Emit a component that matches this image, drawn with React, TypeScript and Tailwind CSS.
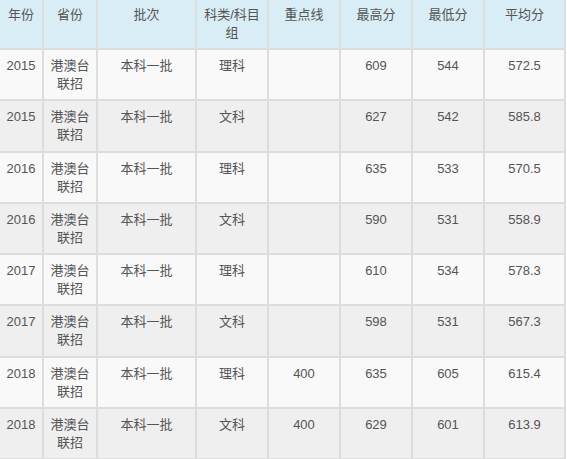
import React from "react";

const headers = ["年份", "省份", "批次", "科类/科目组", "重点线", "最高分", "最低分", "平均分"];

const rows: string[][] = [
  ["2015", "港澳台联招", "本科一批", "理科", "", "609", "544", "572.5"],
  ["2015", "港澳台联招", "本科一批", "文科", "", "627", "542", "585.8"],
  ["2016", "港澳台联招", "本科一批", "理科", "", "635", "533", "570.5"],
  ["2016", "港澳台联招", "本科一批", "文科", "", "590", "531", "558.9"],
  ["2017", "港澳台联招", "本科一批", "理科", "", "610", "534", "578.3"],
  ["2017", "港澳台联招", "本科一批", "文科", "", "598", "531", "567.3"],
  ["2018", "港澳台联招", "本科一批", "理科", "400", "635", "605", "615.4"],
  ["2018", "港澳台联招", "本科一批", "文科", "400", "629", "601", "613.9"],
];

export default function App() {
  return (
    <div
      className="w-[567px] h-[459px] overflow-hidden bg-white text-[13px] leading-[18px] text-[#555]"
      style={{ fontFamily: '"Liberation Sans", "Noto Sans CJK SC", sans-serif' }}
    >
      <div className="grid w-[566px] grid-cols-[42px_52px_97px_70px_70px_70px_70px_79px] gap-[2px] bg-[#dddddd] pr-[2px] pb-[2px]">
        {headers.map((h) => (
          <div key={h} className="h-[48px] bg-[#d9edf7] px-[6px] pt-[6px] text-center break-all">
            {h}
          </div>
        ))}
        {rows.map((r, i) =>
          r.map((c, j) => (
            <div
              key={`${i}-${j}`}
              className={`h-[49.3px] px-[6px] pt-[7px] text-center break-all ${i % 2 === 0 ? "bg-[#f9f9f9]" : "bg-[#efefef]"}`}
            >
              {j === 1 ? (
                <>
                  港澳台
                  <br />
                  联招
                </>
              ) : (
                c
              )}
            </div>
          ))
        )}
      </div>
    </div>
  );
}
